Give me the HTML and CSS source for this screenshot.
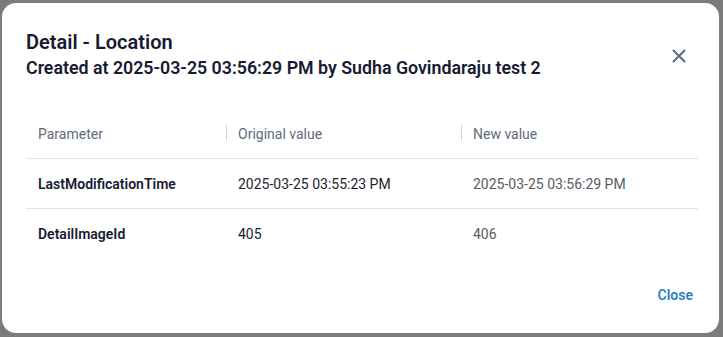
FILE: index.html
```html
<!DOCTYPE html>
<html lang="en">
<head>
    <meta charset="UTF-8">
    <meta name="viewport" content="width=device-width, initial-scale=1.0">
    <title>Detail - Location</title>
    <link rel="stylesheet" href="styles.css">
</head>
<body>
    <div class="dialog">
        <header class="dialog-header">
            <div class="titles">
                <h1>Detail - Location</h1>
                <h2>Created at 2025-03-25 03:56:29 PM by Sudha Govindaraju test 2</h2>
            </div>
            <button class="close-icon" aria-label="Close">
                <svg width="14" height="14" viewBox="0 0 14 14">
                    <path d="M1.5 1.5 L12.5 12.5 M12.5 1.5 L1.5 12.5" stroke="#5b6982" stroke-width="2" stroke-linecap="round" fill="none"/>
                </svg>
            </button>
        </header>

        <table class="changes">
            <thead>
                <tr>
                    <th class="col-param">Parameter</th>
                    <th class="col-old"><span class="sep"></span>Original value</th>
                    <th class="col-new"><span class="sep"></span>New value</th>
                </tr>
            </thead>
            <tbody>
                <tr>
                    <td class="param">LastModificationTime</td>
                    <td class="old">2025-03-25 03:55:23 PM</td>
                    <td class="new">2025-03-25 03:56:29 PM</td>
                </tr>
                <tr>
                    <td class="param">DetailImageId</td>
                    <td class="old">405</td>
                    <td class="new">406</td>
                </tr>
            </tbody>
        </table>

        <footer class="dialog-footer">
            <button class="btn-text">Close</button>
        </footer>
    </div>
</body>
</html>
```

FILE: styles.css
```css
body {
    margin: 0;
    padding: 0;
    font-family: 'Roboto', 'Liberation Sans', sans-serif;
    background: #7b7b7b;
    height: 337px;
    overflow: hidden;
}

.dialog {
    box-sizing: border-box;
    margin: 3px 4px 0 2px;
    height: 330px;
    background: #fff;
    border-radius: 14px;
    padding: 27px 21px 0 24px;
    display: flex;
    flex-direction: column;
}

.dialog-header {
    display: flex;
    justify-content: space-between;
    align-items: center;
}

.dialog-header h1 {
    font-size: 20px;
    line-height: 24px;
    font-weight: 600;
    color: #161b33;
    margin: 0 0 3px;
}

.dialog-header h2 {
    font-size: 17.8px;
    line-height: 22px;
    font-weight: 600;
    color: #161b33;
    margin: 0;
}

.close-icon {
    border: none;
    background: none;
    padding: 0;
    width: 14px;
    height: 14px;
    margin-right: 12px;
    margin-top: 2px;
    cursor: pointer;
}

.close-icon svg {
    display: block;
}

.changes {
    margin-top: 30px;
    width: 100%;
    border-collapse: collapse;
    font-size: 14px;
}

.changes th,
.changes td {
    text-align: left;
    padding: 0 12px;
    height: 49px;
    border-bottom: 1px solid #e1e5eb;
}

.changes tbody tr:last-child td {
    border-bottom: none;
}

.changes th {
    font-weight: 400;
    color: #5f6b7a;
    position: relative;
}

.col-param { width: 176px; }
.col-old { width: 211px; }

.sep {
    position: absolute;
    left: 0;
    top: 16px;
    width: 1px;
    height: 16px;
    background: #d3d8df;
}

.changes td.param {
    font-weight: 600;
    color: #161b33;
}

.changes td.old {
    color: #1c1f2a;
}

.changes td.new {
    color: #575c66;
}

.dialog-footer {
    margin-top: auto;
    display: flex;
    justify-content: flex-end;
    padding-bottom: 26px;
}

.btn-text {
    border: none;
    background: none;
    font-family: inherit;
    font-size: 14px;
    font-weight: 600;
    color: #2680c9;
    padding: 4px 5px;
    cursor: pointer;
}
```
